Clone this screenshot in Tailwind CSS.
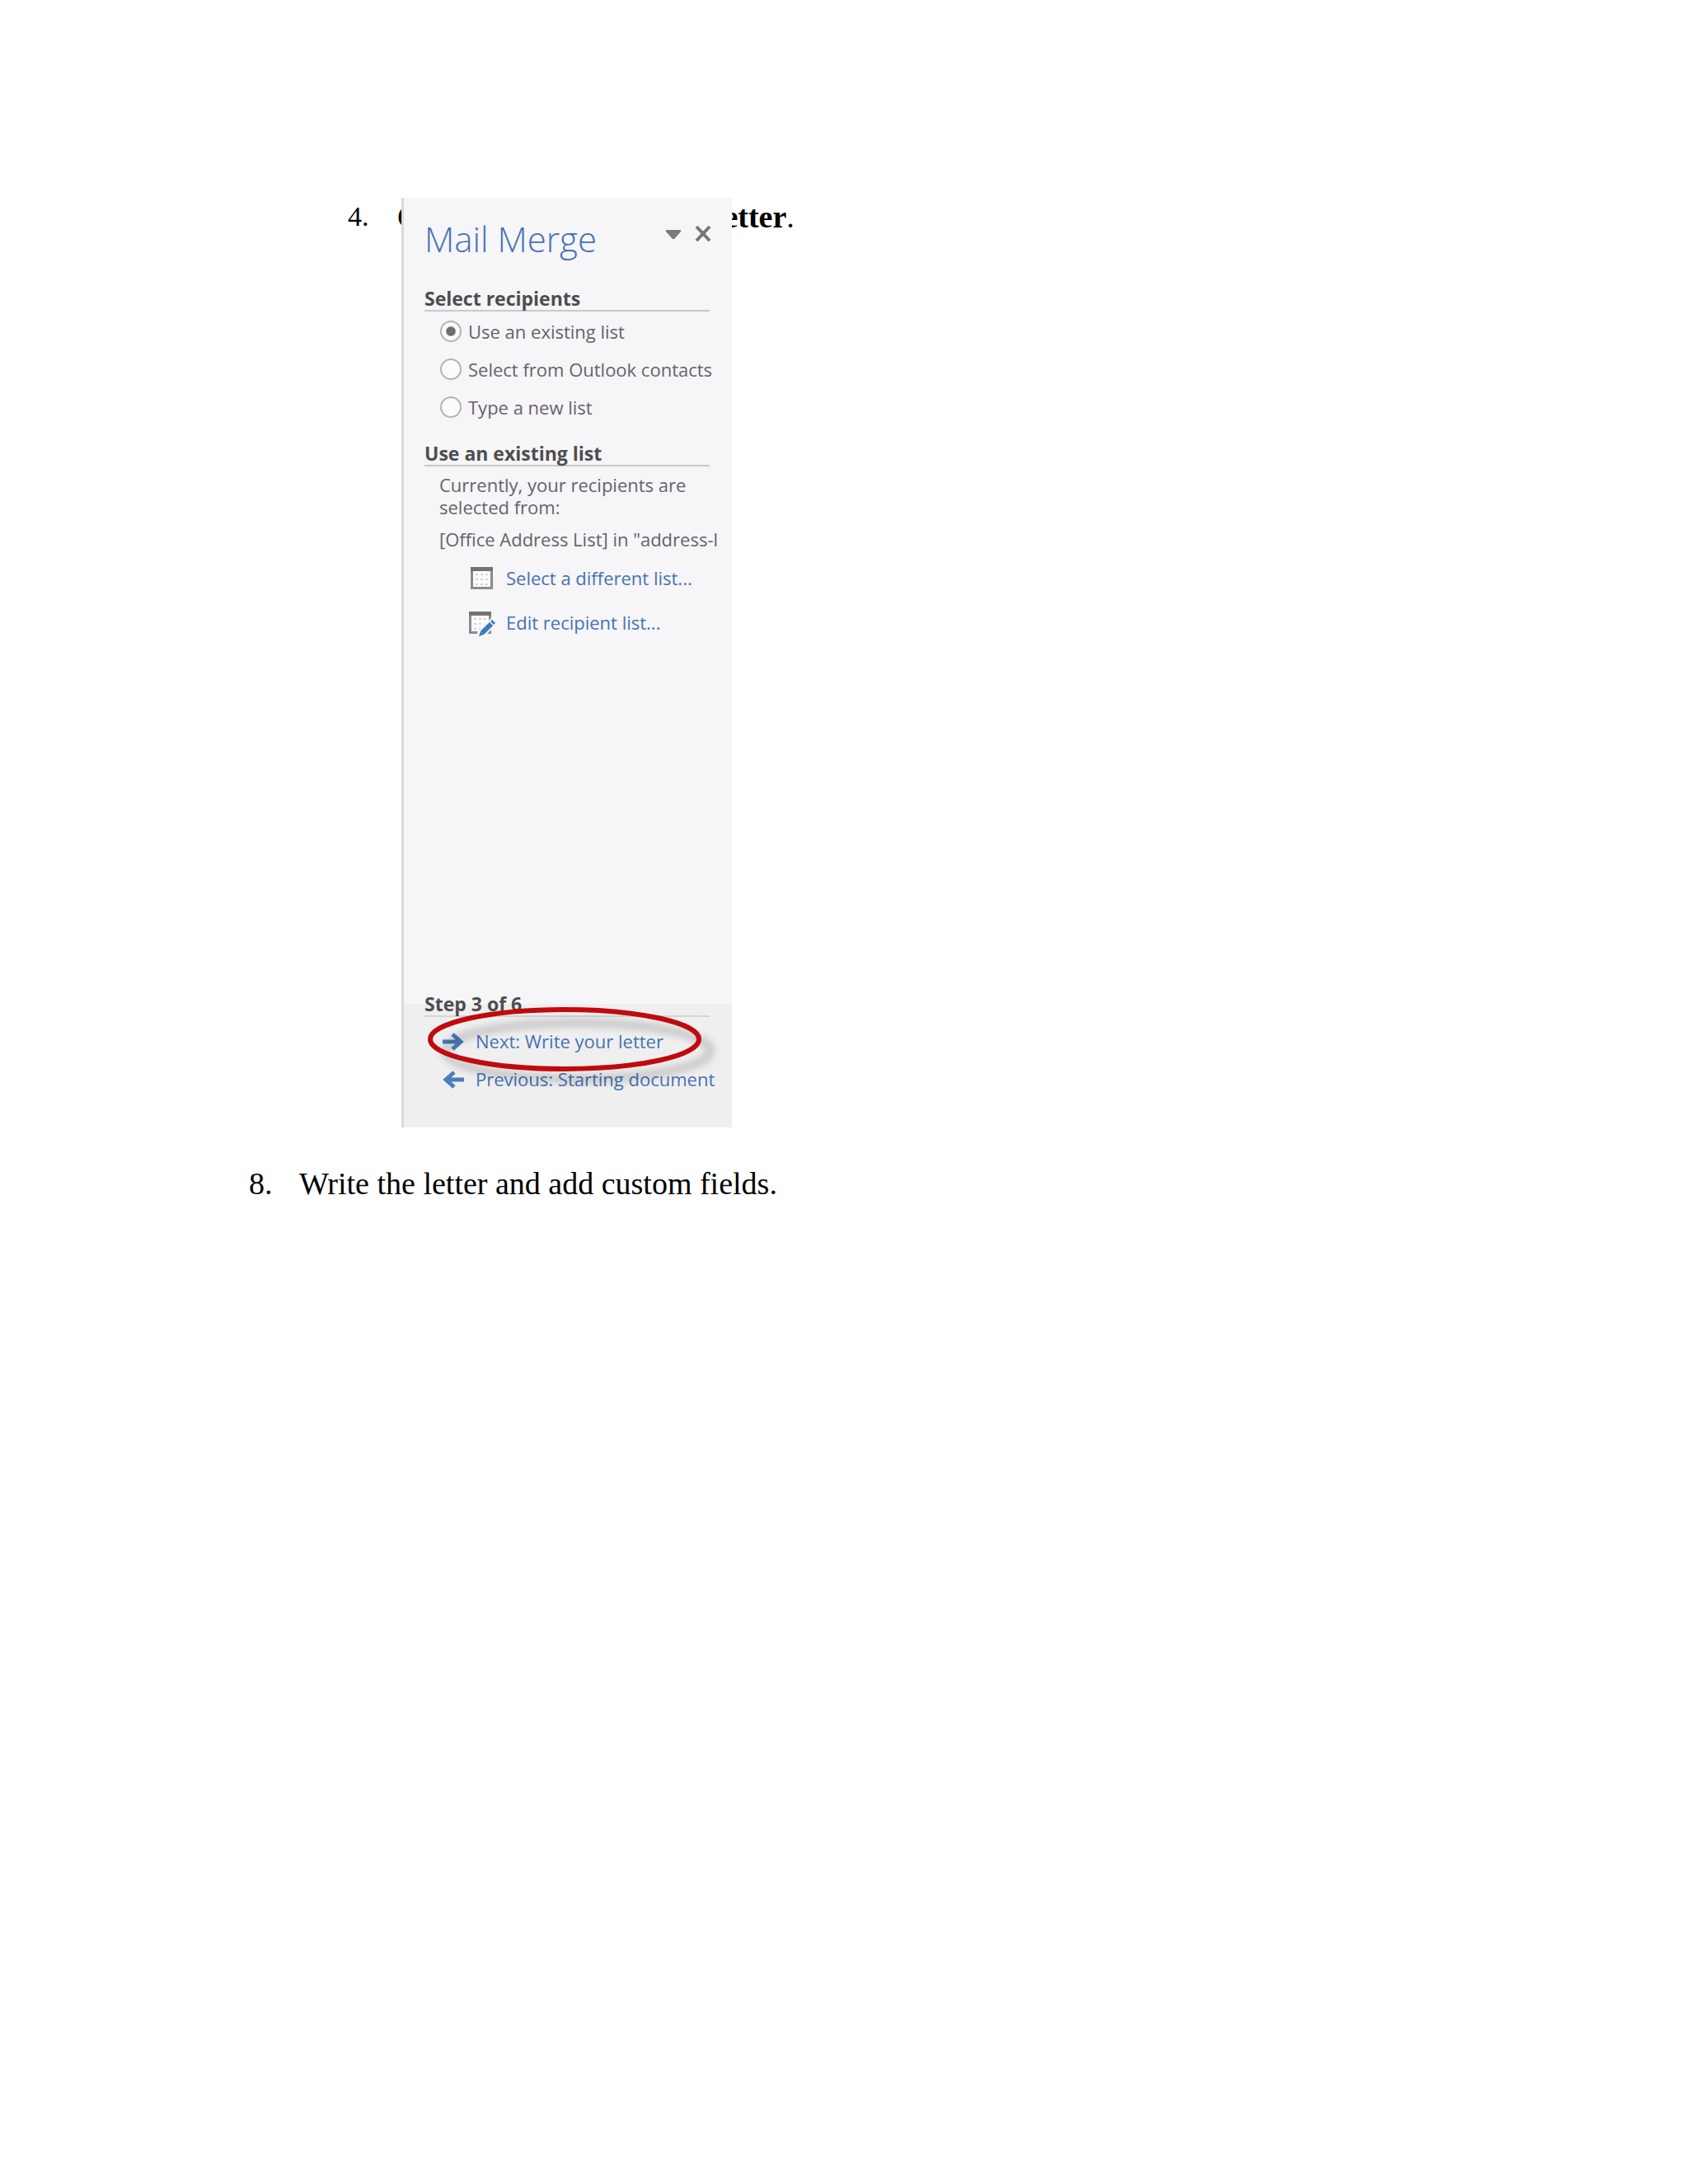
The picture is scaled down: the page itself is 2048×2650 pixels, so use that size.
<!DOCTYPE html>
<html lang="en">
  <head>
    <meta charset="UTF-8" />
    <meta name="viewport" content="width=device-width, initial-scale=1.0" />
    <title>Mail Merge</title>
    <script src="https://cdn.jsdelivr.net/npm/@tailwindcss/browser@4"></script>
  </head>
  <body class="bg-white">
    <main
      class="pt-[240px] pl-[302px] pr-20 pb-20 font-['Liberation_Serif',serif] text-[38px] leading-11 text-black"
    >
      <!-- step 4: the task pane covers most of the sentence -->
      <div class="grid grid-cols-[60px_1fr] pl-[120px]">
        <span class="text-[34px] leading-[46px]">4.</span>
        <p class="col-start-2 row-start-1 leading-[46px] whitespace-nowrap">
          Click <b class="ml-2">Next: Write your letter</b>.
        </p>

        <section
          class="z-10 col-start-2 row-start-1 ml-[5px] flex min-h-[1128px] w-[401px] flex-col overflow-hidden border-l-3 border-[#d9d9da] bg-[#f6f5f7] font-['Open_Sans','Noto_Sans',sans-serif] text-[22px] leading-[27px] text-[#66636a]"
        >
          <header class="flex h-[106px] items-start pt-6 pr-[25px] pl-[25px]">
            <h2 class="flex-1 text-[42px] leading-[52px] font-light text-[#4472b8]">
              Mail Merge
            </h2>
            <button type="button" aria-label="Pane options" class="mt-3.5 mr-[17px]">
              <svg class="block h-3 w-[18px]" viewBox="0 0 18 12" fill="#7a7a7a">
                <path d="M0 1h18v2l-8 9H8L0 3z" />
              </svg>
            </button>
            <button type="button" aria-label="Close" class="mt-[9px]">
              <svg
                class="block h-[21px] w-5"
                viewBox="0 0 20 21"
                fill="none"
                stroke="#777"
                stroke-width="4"
              >
                <path d="M2 2l16 17M18 2L2 19" />
                <path d="M7 10.500h6" stroke-width="6" />
              </svg>
            </button>
          </header>

          <h3
            class="mr-[27px] ml-[25px] h-8 border-b-2 border-[#c9c9ca] text-[23px] leading-8 font-bold text-[#4d4d4f]"
          >
            Select recipients
          </h3>
          <div class="mt-px pl-[44px]">
            <label class="flex h-[46px] items-center gap-2 whitespace-nowrap">
              <input
                type="radio"
                name="source"
                checked
                class="size-[26px] shrink-0 appearance-none rounded-full border-2 border-[#b4b4b6] bg-[#fbfbfb] checked:bg-radial checked:from-[#6e6e6e] checked:from-32% checked:to-[#fbfbfb] checked:to-42%"
              />
              Use an existing list
            </label>
            <label class="flex h-[46px] items-center gap-2 whitespace-nowrap">
              <input
                type="radio"
                name="source"
                class="size-[26px] shrink-0 appearance-none rounded-full border-2 border-[#b4b4b6] bg-[#fbfbfb]"
              />
              Select from Outlook contacts
            </label>
            <label class="flex h-[46px] items-center gap-2 whitespace-nowrap">
              <input
                type="radio"
                name="source"
                class="size-[26px] shrink-0 appearance-none rounded-full border-2 border-[#b4b4b6] bg-[#fbfbfb]"
              />
              Type a new list
            </label>
          </div>

          <h3
            class="mt-[17px] mr-[27px] ml-[25px] h-8 border-b-2 border-[#c9c9ca] text-[23px] leading-8 font-bold text-[#4d4d4f]"
          >
            Use an existing list
          </h3>
          <div class="mt-[9px] mr-[18px] ml-[43px]">
            <p>Currently, your recipients are selected from:</p>
            <p class="mt-3 overflow-hidden whitespace-nowrap">
              [Office Address List] in "address-l
            </p>
          </div>
          <div class="mt-5 flex flex-col gap-[22px] pl-[79px] text-[#4673b4]">
            <a href="#" class="flex gap-[13px]">
              <svg class="h-8 w-8 shrink-0" viewBox="0 0 32 32">
                <path d="M3.5 1.5h24v24h-24z" fill="#fcfcfc" stroke="#8c8a8e" stroke-width="3" />
                <path d="M2 0h27v5H2z" fill="#757277" />
                <path
                  d="M8 9h15M8 15h15M8 21h15"
                  stroke="#d4d4d6"
                  stroke-width="2"
                  stroke-dasharray="3 3"
                />
              </svg>
              Select a different list...
            </a>
            <a href="#" class="flex gap-[13px]">
              <svg class="h-8 w-8 shrink-0" viewBox="0 0 32 32">
                <path d="M1.5 1.5h24v24h-24z" fill="#fcfcfc" stroke="#8c8a8e" stroke-width="3" />
                <path d="M0 0h27v5H0z" fill="#757277" />
                <path
                  d="M6 9h15M6 15h13M6 21h9"
                  stroke="#d4d4d6"
                  stroke-width="2"
                  stroke-dasharray="3 3"
                />
                <path d="M13 29L31 11" stroke="#f6f5f7" stroke-width="10" />
                <path d="M16 26L27 15" stroke="#3e78bd" stroke-width="6" />
                <path d="M28 10l4 4-2 2-4-4zM14 24l4 4-6 2z" fill="#3e78bd" />
              </svg>
              Edit recipient list...
            </a>
          </div>

          <footer
            class="relative mt-auto bg-linear-to-b from-transparent from-[16px] to-[#efeff0] to-[16px] pb-[45px]"
          >
            <h3
              class="mr-[27px] ml-[25px] h-8 border-b-2 border-[#d4d4d5] text-[23px] leading-8 font-bold text-[#4d4d4f]"
            >
              Step 3 of 6
            </h3>
            <div class="mt-4 flex flex-col gap-[19px] pl-[47px] text-[#4673b4]">
              <a href="#" class="flex items-center gap-3.5 whitespace-nowrap">
                <svg
                  class="h-[22px] w-[26px] shrink-0"
                  viewBox="0 0 26 22"
                  fill="none"
                  stroke="#4a7ebb"
                  stroke-width="5"
                >
                  <path d="M0 11h23M12 2l10 9-10 9" />
                </svg>
                Next: Write your letter
              </a>
              <a href="#" class="flex items-center gap-3.5 whitespace-nowrap">
                <svg
                  class="h-[22px] w-[26px] shrink-0"
                  viewBox="0 0 26 22"
                  fill="none"
                  stroke="#4a7ebb"
                  stroke-width="5"
                >
                  <path d="M26 11H3M14 2L4 11l10 9" />
                </svg>
                Previous: Starting document
              </a>
            </div>
            <!-- red callout ring with its shadow -->
            <svg
              class="pointer-events-none absolute top-4 left-6 h-[110px] w-[360px]"
              viewBox="0 0 360 110"
              fill="none"
            >
              <ellipse
                cx="187"
                cy="57"
                rx="161"
                ry="34"
                stroke="#000"
                stroke-opacity=".16"
                stroke-width="10"
                class="blur-[4px]"
              />
              <ellipse cx="171" cy="43" rx="163" ry="36" stroke="#c00a0e" stroke-width="6" />
            </svg>
          </footer>
        </section>
      </div>

      <!-- step 8 -->
      <div class="mt-[46px] grid grid-cols-[61px_1fr]">
        <span>8.</span>
        <p>Write the letter and add custom fields.</p>
      </div>
    </main>
  </body>
</html>
